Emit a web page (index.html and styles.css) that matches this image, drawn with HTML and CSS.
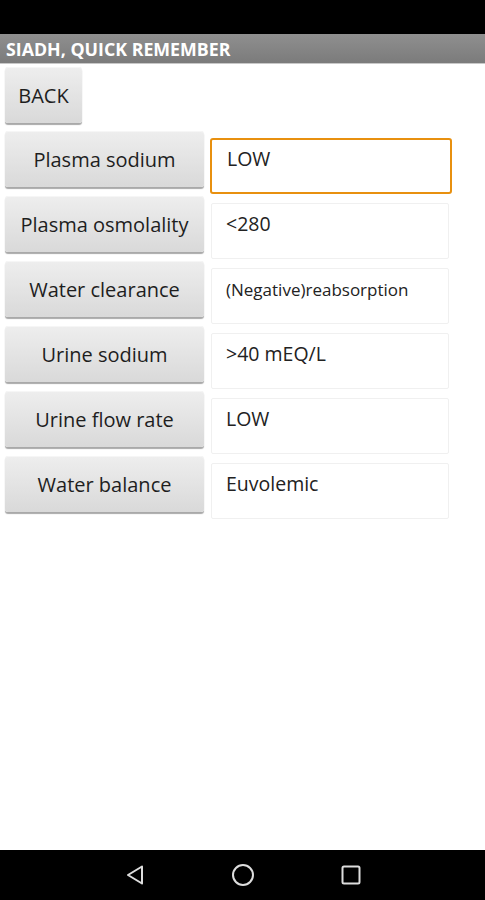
FILE: index.html
```html
<!DOCTYPE html>
<html lang="en">
<head>
    <meta charset="UTF-8">
    <meta name="viewport" content="width=device-width, initial-scale=1.0">
    <title>SIADH, Quick Remember</title>
    <link rel="stylesheet" href="styles.css">
</head>
<body>
    <div class="status-bar"></div>
    <div class="title-bar">SIADH, QUICK REMEMBER</div>
    <div class="content">
        <button class="btn btn-back">BACK</button>
        <div class="row">
            <button class="btn btn-label">Plasma sodium</button>
            <div class="field focused">LOW</div>
        </div>
        <div class="row">
            <button class="btn btn-label">Plasma osmolality</button>
            <div class="field">&lt;280</div>
        </div>
        <div class="row">
            <button class="btn btn-label">Water clearance</button>
            <div class="field small">(Negative)reabsorption</div>
        </div>
        <div class="row">
            <button class="btn btn-label">Urine sodium</button>
            <div class="field">&gt;40 mEQ/L</div>
        </div>
        <div class="row">
            <button class="btn btn-label">Urine flow rate</button>
            <div class="field">LOW</div>
        </div>
        <div class="row">
            <button class="btn btn-label">Water balance</button>
            <div class="field">Euvolemic</div>
        </div>
    </div>
    <div class="nav-bar">
        <svg width="22" height="22" viewBox="0 0 22 22"><path d="M18 2.5 L4 11 L18 19.5 Z" fill="none" stroke="#ddd" stroke-width="2" stroke-linejoin="round"/></svg>
        <svg width="24" height="24" viewBox="0 0 24 24"><circle cx="12" cy="12" r="10" fill="none" stroke="#ddd" stroke-width="2"/></svg>
        <svg width="22" height="22" viewBox="0 0 22 22"><rect x="2.5" y="2.5" width="17" height="17" rx="1.5" fill="none" stroke="#ddd" stroke-width="2"/></svg>
    </div>
</body>
</html>
```

FILE: styles.css
```css
body, html {
    margin: 0;
    padding: 0;
    width: 100%;
    height: 100%;
    overflow: hidden;
}
body {
    display: flex;
    flex-direction: column;
    background: #fff;
    font-family: "Open Sans", "Liberation Sans", sans-serif;
}
.status-bar {
    height: 34px;
    background: #000;
}
.title-bar {
    height: 30px;
    box-sizing: border-box;
    padding: 2px 6px 0;
    background: linear-gradient(#8f8f8f, #7b7b7b);
    border-bottom: 1px solid #c8c8c8;
    color: #fff;
    font-size: 17.8px;
    font-weight: bold;
    line-height: 26px;
}
.content {
    flex: 1;
    padding: 3px 0 0 5px;
}
.btn {
    display: block;
    box-sizing: border-box;
    height: 56px;
    border: none;
    border-radius: 3px;
    background: linear-gradient(#eeeeee, #d9d9d9);
    box-shadow: 0 2px 1px #a9a9a9, inset 0 1px 0 #f6f6f6;
    color: #1e1e1e;
    font-family: "Open Sans", "Liberation Sans", sans-serif;
    font-size: 20px;
    padding: 0;
}
.btn-back {
    width: 77px;
    margin-bottom: 8px;
}
.row {
    display: flex;
    gap: 7px;
    height: 65px;
}
.btn-label {
    width: 199px;
}
.field {
    box-sizing: border-box;
    width: 238px;
    height: 56px;
    margin-top: 7px;
    padding: 6px 0 0 14px;
    border: 1px solid #f0f0f0;
    border-radius: 2px;
    color: #222;
    font-size: 19.5px;
}
.field.small {
    font-size: 17px;
    padding-top: 9px;
}
.field.focused {
    width: 242px;
    height: 56px;
    margin: 7px 0 0 -1px;
    padding: 5px 0 0 15px;
    border: 2px solid #e8900f;
    border-radius: 3px;
}
.nav-bar {
    height: 50px;
    background: #000;
    display: flex;
    align-items: center;
    justify-content: center;
    gap: 85px;
}
```
